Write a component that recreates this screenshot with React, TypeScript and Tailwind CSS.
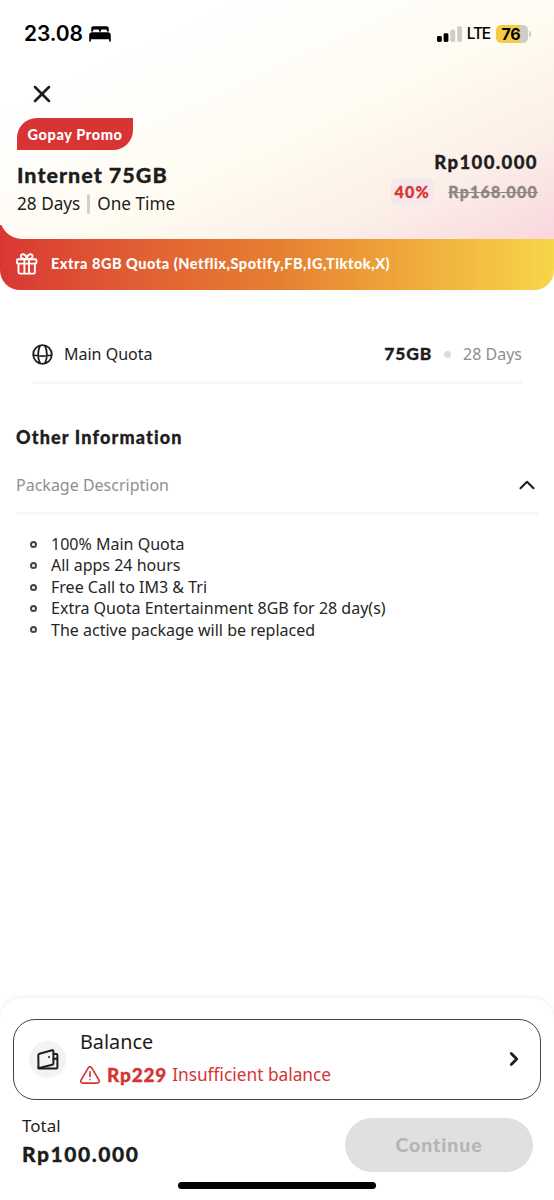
import React, { useState } from "react";
import { ChevronRight, ChevronUp, X } from "lucide-react";

const DESCRIPTION = [
  "100% Main Quota",
  "All apps 24 hours",
  "Free Call to IM3 & Tri",
  "Extra Quota Entertainment 8GB for 28 day(s)",
  "The active package will be replaced",
];

const BedIcon = () => (
  <svg width="22" height="16" viewBox="0 0 22 16" fill="black">
    <path d="M2.2 5.4V2.6C2.2 1 3 .2 4.6 .2h12.8c1.6 0 2.4.8 2.4 2.4v2.8h-2V4.3c0-.6-.3-.9-.9-.9h-4c-.6 0-.9.3-.9.9v1.1h-2V4.3c0-.6-.3-.9-.9-.9h-4c-.6 0-.9.3-.9.9v1.1z" />
    <path d="M.2 15V9.2C.2 7.3 1.3 6.2 3.2 6.2h15.6c1.9 0 3 1.1 3 3V15c0 .9-1.7.9-1.7 0v-1.7H1.900V15c0 .9-1.7.9-1.7 0z" />
  </svg>
);

const SignalIcon = () => (
  <svg width="25" height="16" viewBox="0 0 25 16">
    <rect x="0" y="10" width="4.8" height="6" rx="1.4" fill="#000" />
    <rect x="6.6" y="7.3" width="4.8" height="8.7" rx="1.4" fill="#000" />
    <rect x="13.4" y="3.8" width="4.8" height="12.2" rx="1.4" fill="#cdccc8" />
    <rect x="20.2" y="0.3" width="4.8" height="15.7" rx="1.4" fill="#cdccc8" />
  </svg>
);

const GiftIcon = () => (
  <svg width="22" height="22" viewBox="0 0 22 22" fill="none" stroke="#fff" strokeWidth="1.9" strokeLinejoin="round" strokeLinecap="round">
    <rect x="1" y="6.2" width="19.4" height="4.4" rx="1" />
    <path d="M2.5 10.6v8.6c0 .9.5 1.4 1.4 1.4h13.6c.9 0 1.4-.5 1.4-1.4v-8.6M8.4 6.2v14.4M13 6.2v14.4" />
    <path d="M10.7 6C7 6 4.6 5 4.8 3c.3-2 3.2-2.5 4.6-.6.7 1 1.2 2.2 1.3 3.6zM10.7 6c3.7 0 6.1-1 5.9-3-.3-2-3.2-2.5-4.6-.6-.7 1-1.2 2.2-1.3 3.6z" />
  </svg>
);

const GlobeIcon = () => (
  <svg width="21" height="21" viewBox="0 0 21 21" fill="none" stroke="#1d1d1d" strokeWidth="1.8">
    <circle cx="10.5" cy="10.5" r="9.3" />
    <path d="M8 1.6C5.7 7 5.7 14 8 19.4M13 1.6c2.3 5.4 2.3 12.4 0 17.8M1.2 11c5 1.5 13.6 1.5 18.6 0" />
  </svg>
);

const WalletIcon = () => (
  <svg width="22" height="21" viewBox="0 0 22 21" fill="none" stroke="#1d1d1d" strokeWidth="2" strokeLinejoin="round" strokeLinecap="round">
    <path d="M1.3 6.2c0-.8.4-1.300 1.200-1.500L15 1.300c.9-.2 1.400.1 1.400 1v12.100c0 .8-.4 1.200-1.200 1.400L1.500 19.300z" />
    <path d="M1.3 18.500c0 .7.4 1.100 1.100 1.100h16.900c.7 0 1.100-.4 1.100-1.100V6.200c0-.7-.4-1.100-1.100-1.100h-2.500M16.600 9.800h3.600" />
    <circle cx="12" cy="8" r="1" fill="#1d1d1d" stroke="none" />
  </svg>
);

const WarningIcon = () => (
  <svg width="20" height="18" viewBox="0 0 20 18" fill="none" stroke="#d63333" strokeWidth="1.6" strokeLinejoin="round" strokeLinecap="round">
    <path d="M8.4 1.6 1.1 14c-.9 1.6 0 3.1 1.8 3.1h14.2c1.8 0 2.7-1.5 1.8-3.1L11.6 1.600c-.8-1.200-2.400-1.200-3.200 0z" />
    <path d="M10 5.8v5M10 13.6v.2" />
  </svg>
);

const StatusBar = () => (
  <div className="flex h-[67px] items-center justify-between pl-[24px] pr-[23px] font-['Inter',sans-serif] text-black">
    <div className="flex items-center gap-[6px]">
      <span className="text-[21px] font-semibold leading-none tracking-[-0.1px]">23.08</span>
      <BedIcon />
    </div>
    <div className="flex items-center">
      <SignalIcon />
      <span className="ml-[5px] text-[15.5px] font-medium leading-none tracking-[-1.2px]">LTE</span>
      <span className="ml-[6px] flex h-[18px] w-[32px] items-center justify-center rounded-[5px] bg-linear-to-r from-[#f5cb45] from-76% to-[#cdccc8] to-76% pr-[2px] text-[16px] font-bold leading-none tracking-[-0.2px]">
        76
      </span>
      <span className="ml-px h-[6px] w-[2px] rounded-r-full bg-[#cdccc8]" />
    </div>
  </div>
);

const PackageHeader = () => (
  <header className="relative h-[239px] rounded-bl-[22px] bg-[linear-gradient(155deg,#ffffff_0%,#ffffff_22%,#fffbf1_56%,#fcefe8_78%,#f9d7de_100%)]">
    <StatusBar />
    <div className="flex h-[51px] items-center pl-[28px] pt-[3px]">
      <button aria-label="Close">
        <X size={28} strokeWidth={2.2} color="#1d1d1d" />
      </button>
    </div>
    <div className="flex justify-between pl-[17px] pr-[16px]">
      <div>
        <div className="flex h-[32px] w-[116px] items-center justify-center rounded-br-[20px] rounded-tl-[20px] bg-[#d93434] pt-px font-['Lato',sans-serif] text-[14.5px] font-black tracking-[0.6px] text-white">
          Gopay Promo
        </div>
        <h1 className="mt-[12px] whitespace-nowrap font-['Lato',sans-serif] text-[21.5px] font-black leading-[26px] tracking-[1px] [-webkit-text-stroke:0.3px]">
          Internet 75GB
        </h1>
        <div className="mt-[4px] flex h-[24px] items-center text-[17.2px] leading-none">
          <span>28 Days</span>
          <span className="mx-[7px] h-[20px] w-[3px] rounded-full bg-[#d2cfcc]" />
          <span>One Time</span>
        </div>
      </div>
      <div className="flex flex-col items-end pt-[32px] font-['Lato',sans-serif] font-black">
        <span className="text-[18.5px] leading-[24px] tracking-[1.4px] [-webkit-text-stroke:0.3px]">Rp100.000</span>
        <div className="mt-[5px] flex items-center text-[16px] leading-none">
          <span className="flex h-[26px] w-[43px] items-center justify-center rounded-[5px] bg-[#f5e8ec] pr-px tracking-[1.2px] text-[#d93434] [-webkit-text-stroke:0.3px]">
            40%
          </span>
          <span className="ml-[14px] tracking-[1.2px] text-[#8c8686] line-through [-webkit-text-stroke:0.3px]">Rp168.000</span>
        </div>
      </div>
    </div>
  </header>
);

const BonusBanner = () => (
  <div className="-mt-[14px] flex h-[65px] items-center rounded-b-[20px] bg-linear-to-r from-[#d93633] via-[#e67f31] via-50% to-[#f7d648] pl-[16px] pt-[12px] text-white">
    <GiftIcon />
    <span className="ml-[13px] whitespace-nowrap font-['Lato',sans-serif] text-[14.5px] font-black tracking-[0.53px]">
      Extra 8GB Quota (Netflix,Spotify,FB,IG,Tiktok,X)
    </span>
  </div>
);

const App: React.FC = () => {
  const [open, setOpen] = useState(true);

  return (
    <div className="flex h-[1200px] w-[554px] flex-col overflow-hidden bg-white font-['Noto_Sans',sans-serif] text-[#1d1d1d]">
      <PackageHeader />
      <BonusBanner />

      {/* Quota row */}
      <div className="mx-[32px] mt-[37px] flex h-[57px] items-center border-b-[3px] border-[#f7f7f7] text-[16px]">
        <GlobeIcon />
        <span className="ml-[11px]">Main Quota</span>
        <span className="ml-auto font-['Lato',sans-serif] text-[17.5px] font-black tracking-[0.8px] [-webkit-text-stroke:0.3px]">
          75GB
        </span>
        <span className="mx-[12px] h-[7px] w-[7px] rounded-full bg-[#dcdcdc]" />
        <span className="text-[#8f8f8f]">28 Days</span>
      </div>

      {/* Package description */}
      <section className="px-[16px] pt-[41px]">
        <h2 className="font-['Lato',sans-serif] text-[18px] font-black leading-[24px] tracking-[1.15px] [-webkit-text-stroke:0.3px]">
          Other Information
        </h2>
        <button
          onClick={() => setOpen(!open)}
          className="mt-[8px] flex h-[58px] w-full items-center justify-between border-b-[3px] border-[#f7f7f7] text-[16px] text-[#8f8f8f]"
        >
          <span>Package Description</span>
          <ChevronUp size={26} strokeWidth={1.9} color="#1d1d1d" className="-mr-[2px]" />
        </button>
        {open && (
          <ul className="pt-[19px] text-[16.03px] leading-[21.4px] text-[#262626]">
            {DESCRIPTION.map((line) => (
              <li key={line} className="flex items-center pl-[14px]">
                <span className="-mt-px mr-[14px] h-[7px] w-[7px] rounded-full border-2 border-[#444]" />
                {line}
              </li>
            ))}
          </ul>
        )}
      </section>

      {/* Payment sheet */}
      <footer className="mt-auto flex h-[202px] flex-col rounded-t-[22px] bg-white px-[13px] pt-[21px] shadow-[0_-1px_5px_rgba(0,0,0,0.07)]">
        <button className="flex h-[81px] w-full items-center rounded-[22px] border border-[#444] pb-px pl-[15px] pr-[15px] text-left">
          <span className="flex h-[37px] w-[37px] items-center justify-center rounded-full bg-[#f3f3f3]">
            <WalletIcon />
          </span>
          <span className="-mt-[2px] ml-[14px] flex flex-col">
            <span className="text-[19.8px] leading-[26px]">Balance</span>
            <span className="mt-[7px] flex items-center text-[17.3px] leading-[26px] text-[#d63333]">
              <WarningIcon />
              <span className="ml-[7px] mr-[5px] font-['Lato',sans-serif] text-[19px] font-black tracking-[0.8px] [-webkit-text-stroke:0.3px]">
                Rp229
              </span>
              Insufficient balance
            </span>
          </span>
          <ChevronRight size={22} strokeWidth={3} color="#1d1d1d" className="ml-auto" />
        </button>
        <div className="flex justify-between pl-[9px] pr-[8px] pt-[18px]">
          <div>
            <div className="-mt-[4px] text-[17px] leading-[24px]">Total</div>
            <div className="mt-[3px] font-['Lato',sans-serif] text-[21px] font-black leading-[26px] tracking-[1.55px] [-webkit-text-stroke:0.3px]">
              Rp100.000
            </div>
          </div>
          <button
            disabled
            className="h-[54px] w-[188px] rounded-full bg-[#e0e0e0] font-['Lato',sans-serif] text-[19.5px] font-black tracking-[0.9px] text-[#b5b5b5]"
          >
            Continue
          </button>
        </div>
        <div className="mx-auto mt-[10px] h-[7px] w-[198px] shrink-0 rounded-full bg-black" />
      </footer>
    </div>
  );
};

export default App;
